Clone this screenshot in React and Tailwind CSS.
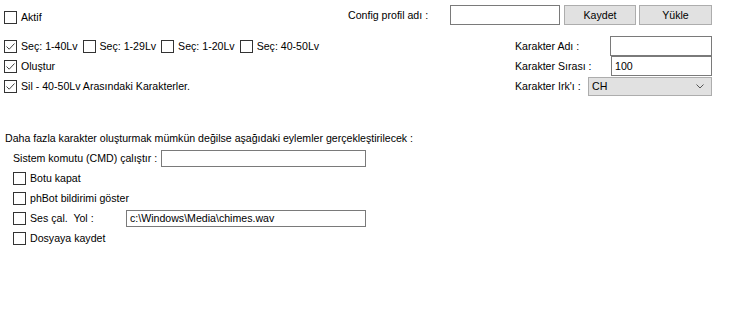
import React from 'react';

const font = { fontFamily: '"Liberation Sans", Arial, sans-serif' };

function Box({ checked }) {
  return (
    <span className="w-[13px] h-[13px] border border-[#333333] bg-white shrink-0 flex items-center justify-center">
      {checked && (
        <svg width="11" height="11" viewBox="0 0 11 11">
          <path d="M1.5 5.5 L4.2 8.2 L9.5 2.5" fill="none" stroke="#444444" strokeWidth="1" />
        </svg>
      )}
    </span>
  );
}

function Check({ checked, label, className = '' }) {
  return (
    <label className={`flex items-center gap-[4px] whitespace-pre ${className}`}>
      <Box checked={checked} />
      <span>{label}</span>
    </label>
  );
}

function Field({ className = '', value = '' }) {
  return (
    <div className={`border border-[#7a7a7a] bg-white flex items-center px-[3px] ${className}`}>
      {value}
    </div>
  );
}

function Btn({ children, className = '' }) {
  return (
    <div className={`bg-[#e1e1e1] border border-[#adadad] flex items-center justify-center ${className}`}>
      {children}
    </div>
  );
}

export default function App() {
  return (
    <div className="w-[742px] h-[322px] bg-white text-black text-[10.6px] leading-none whitespace-nowrap" style={font}>
      {/* top section */}
      <div className="flex justify-between pt-[5px] pr-[30px]">
        <div className="pl-[4px]">
          <Check label="Aktif" className="h-[20px] mt-[2px]" />
          <div className="mt-[9px]">
            <div className="h-[20px] flex items-center gap-[5px]">
              <Check checked label="Seç: 1-40Lv" />
              <Check label="Seç: 1-29Lv" />
              <Check label="Seç: 1-20Lv" />
              <Check label="Seç: 40-50Lv" />
            </div>
            <Check checked label="Oluştur" className="h-[20px]" />
            <Check checked label="Sil - 40-50Lv Arasındaki Karakterler." className="h-[20px]" />
          </div>
        </div>

        <div className="flex flex-col items-end">
          <div className="flex items-center h-[20px]">
            <span className="w-[102px]">Config profil adı :</span>
            <Field className="w-[110px] h-[20px]" />
            <Btn className="w-[72px] h-[20px] ml-[4px]">Kaydet</Btn>
            <Btn className="w-[73px] h-[20px] ml-[3px]">Yükle</Btn>
          </div>
          <div className="mt-[11px] w-[197px]">
            <div className="flex items-center h-[20px]">
              <span className="w-[95px]">Karakter Adı :</span>
              <Field className="w-[102px] h-[20px]" />
            </div>
            <div className="flex items-center h-[20px]">
              <span className="w-[96px]">Karakter Sırası :</span>
              <Field className="w-[101px] h-[20px]" value="100" />
            </div>
            <div className="flex items-center h-[20px]">
              <span className="w-[73px]">Karakter Irk'ı :</span>
              <div className="w-[124px] h-[19px] bg-[#e1e1e1] border border-[#adadad] flex items-center justify-between pl-[3px] pr-[7px]">
                <span>CH</span>
                <svg width="8" height="5" viewBox="0 0 8 5">
                  <path d="M0.5 0.5 L4 4 L7.5 0.5" fill="none" stroke="#555555" strokeWidth="1" />
                </svg>
              </div>
            </div>
          </div>
        </div>
      </div>

      {/* bottom section */}
      <div className="mt-[32px] pl-[5px]">
        <div className="h-[20px] flex items-center">
          Daha fazla karakter oluşturmak mümkün değilse aşağıdaki eylemler gerçekleştirilecek :
        </div>
        <div className="pl-[8px]">
          <div className="h-[20px] flex items-center">
            <span className="w-[148px]">Sistem komutu (CMD) çalıştır :</span>
            <Field className="w-[205px] h-[17px]" />
          </div>
          <Check label="Botu kapat" className="h-[20px]" />
          <Check label="phBot bildirimi göster" className="h-[20px]" />
          <div className="h-[20px] flex items-center">
            <Check label="Ses çal.  Yol :" className="w-[113px]" />
            <Field className="w-[240px] h-[17px]" value="c:\Windows\Media\chimes.wav" />
          </div>
          <Check label="Dosyaya kaydet" className="h-[20px]" />
        </div>
      </div>
    </div>
  );
}
